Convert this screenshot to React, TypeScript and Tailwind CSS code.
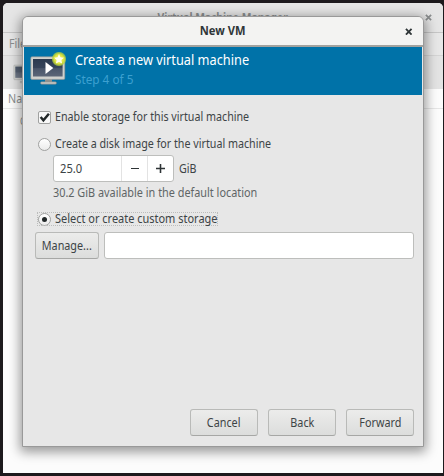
import type { ReactNode } from 'react';

function MonitorIcon({ className }: { className: string }) {
  return (
    <svg viewBox="0 0 36 34" className={className}>
      <defs>
        <linearGradient id="screen" x1="0" y1="0" x2="0" y2="1">
          <stop offset="0" stopColor="#2b3a4f" />
          <stop offset="0.5" stopColor="#36445a" />
          <stop offset="0.55" stopColor="#4a566a" />
          <stop offset="1" stopColor="#5c6678" />
        </linearGradient>
        <radialGradient id="glow">
          <stop offset="0" stopColor="#f4f68a" />
          <stop offset="0.6" stopColor="#dfe43a" />
          <stop offset="0.85" stopColor="#b9d53a" stopOpacity="0.75" />
          <stop offset="1" stopColor="#9cc850" stopOpacity="0" />
        </radialGradient>
      </defs>
      <path d="M15 27h7v4h-7z" fill="#8f908e" />
      <rect x="10.5" y="29.8" width="16" height="2.4" rx="1.2" fill="#c5c6c2" stroke="#77797a" strokeWidth="0.5" />
      <rect x="0.8" y="4.8" width="34" height="22.6" rx="1.2" fill="#d0d1cd" stroke="#8d918f" strokeWidth="0.6" />
      <rect x="3" y="7" width="29.6" height="17.5" fill="url(#screen)" />
      <path d="M15.5 10v12l7.8-6z" fill="#fff" />
      <circle cx="29" cy="7" r="7.6" fill="url(#glow)" />
      <path d="m29 2 1.5 3.2 3.5.5-2.6 2.4.7 3.5-3.1-1.7-3.1 1.7.7-3.5L24 5.7l3.5-.5z" fill="#fffff0" />
    </svg>
  );
}

function CloseIcon({ className }: { className: string }) {
  return (
    <svg viewBox="0 0 8 8" className={className} fill="none" stroke="currentColor" strokeWidth="2">
      <path d="M1 1l6 6M7 1L1 7" />
    </svg>
  );
}

function Label({ className = 'scale-x-[0.892]', children }: { className?: string; children: ReactNode }) {
  return <span className={`inline-block origin-left whitespace-nowrap ${className}`}>{children}</span>;
}

function Button({ className, children }: { className: string; children: ReactNode }) {
  return (
    <button className={`flex h-[27px] items-center justify-center rounded-[3px] border border-[#b9bab8] border-b-[#a6a7a5] bg-linear-to-b from-[#ececeb] to-[#dcdddc] ${className}`}>
      <span className="scale-x-[0.9] whitespace-nowrap">{children}</span>
    </button>
  );
}

function Radio({ checked = false }: { checked?: boolean }) {
  return (
    <span className="flex size-[13px] shrink-0 items-center justify-center rounded-full border border-[#a0a1a0] bg-linear-to-b from-white to-[#ebebeb]">
      {checked && <span className="size-[5px] rounded-full bg-[#222829]" />}
    </span>
  );
}

export default function App() {
  return (
    <div className="relative h-[476px] w-[444px] overflow-hidden bg-[#1d1a1d] pt-[3px] pl-[3px] font-['Noto_Sans',sans-serif] text-[12px] leading-4 text-[#3d4446]">
      <div className="flex h-[470px] w-[440px] flex-col overflow-hidden rounded-t-[5px] bg-[#fcfcfc] text-[#8b8e8f]">
        <div className="relative flex h-[30px] shrink-0 items-center justify-center border-b border-[#c6c6c6] bg-[#e5e5e5] pt-px font-bold">
          <span className="scale-x-[0.86]">Virtual Machine Manager</span>
          <CloseIcon className="absolute top-[11px] right-[11px] size-[7px]" />
        </div>
        <div className="flex h-[23px] shrink-0 items-center border-b border-[#d4d4d4] bg-[#e7e7e7] pl-[6px]">
          <Label>File</Label>
        </div>
        <div className="flex h-[33px] shrink-0 items-center bg-[#e3e3e3] pl-[10px]">
          <MonitorIcon className="h-[22px] w-[24px] opacity-80" />
        </div>
        <div className="flex h-[20px] shrink-0 items-center border-b border-[#e6e6e6] pl-[5px]">
          <Label>Name</Label>
        </div>
        <div className="pt-[4px] pl-[17px] text-[10px]"><Label>QEMU/KVM</Label></div>
      </div>

      <div className="absolute top-[16px] left-[22px] flex h-[431px] w-[402px] flex-col overflow-hidden rounded-t-[6px] border border-[#999] bg-[#e7e7e7] shadow-[0_3px_12px_2px_rgba(0,0,0,0.4)]">
        <div className="relative flex h-[30px] shrink-0 items-center justify-center border-b-2 border-[#a2a29f] bg-[#f3f3f2] font-bold text-[#2f3638]">
          <span className="scale-x-[0.93]">New VM</span>
          <CloseIcon className="absolute top-[10.5px] right-[10.5px] size-[7.5px]" />
        </div>
        <div className="mx-px flex h-[48px] shrink-0 gap-[9px] bg-[#0072a8] pl-[6px] text-white">
          <MonitorIcon className="mt-[5px] h-[34px] w-[36px]" />
          <div className="flex flex-col pt-[4px]">
            <Label className="scale-x-[0.912] text-[14px] leading-[18px]">Create a new virtual machine</Label>
            <Label className="scale-x-[0.98] leading-[21px] text-[#3ca0d0]">Step 4 of 5</Label>
          </div>
        </div>
        <div className="flex grow flex-col pr-[9px] pl-[12px]">
          <div className="mt-[14px] flex h-4 items-center gap-[3.5px] pl-[3px]">
            <span className="flex size-[13px] items-center justify-center rounded-[2px] border border-[#a0a1a0] bg-[#f8f8f8]">
              <svg viewBox="0 0 10 10" className="size-[11px] shrink-0" fill="none" stroke="#222829" strokeWidth="2.2"><path d="m1.5 4.500 2.500 3L9 1.500" /></svg>
            </span>
            <Label>Enable storage for this virtual machine</Label>
          </div>
          <div className="mt-[11px] flex h-4 items-center gap-[3.5px] pl-[3px]">
            <Radio />
            <Label>Create a disk image for the virtual machine</Label>
          </div>
          <div className="mt-[3px] flex items-center gap-[5px] pl-[18px]">
            <div className="flex h-[27px] w-[121px] items-center rounded-[3px] border border-[#bdbebc] bg-white">
              <span className="w-[67px] pl-[6px]"><Label className="scale-x-[0.93]">25.0</Label></span>
              <span className="flex h-full w-[26px] items-center justify-center border-l border-[#e3e3e3]"><i className="h-[1.5px] w-2 bg-[#2e3436]" /></span>
              <span className="flex h-full flex-1 items-center justify-center border-l border-[#e3e3e3]">
                <svg viewBox="0 0 8 8" className="size-[9px]" stroke="#2e3436" strokeWidth="1.4"><path d="M0 4h8M4 0v8" /></svg>
              </span>
            </div>
            <Label>GiB</Label>
          </div>
          <div className="mt-[3px] h-4 pl-[18px] text-[#606566]"><Label className="scale-x-[0.905]">30.2 GiB available in the default location</Label></div>
          <div className="mt-[11px] ml-[2px] flex h-[14px] w-[181px] items-center gap-[3.5px] pl-px outline-1 outline-offset-[-1px] outline-dotted outline-[#bcbdbc]">
            <Radio checked />
            <Label className="scale-x-[0.914]">Select or create custom storage</Label>
          </div>
          <div className="mt-[6px] flex gap-[5px]">
            <Button className="w-[64px]">Manage...</Button>
            <div className="h-[27px] flex-1 rounded-[3px] border border-[#bdbebc] bg-white" />
          </div>
          <div className="mt-auto mb-[10px] flex justify-end gap-[10px]">
            <Button className="w-[68px]">Cancel</Button>
            <Button className="w-[68px]">Back</Button>
            <Button className="w-[68px]">Forward</Button>
          </div>
        </div>
      </div>
    </div>
  );
}
